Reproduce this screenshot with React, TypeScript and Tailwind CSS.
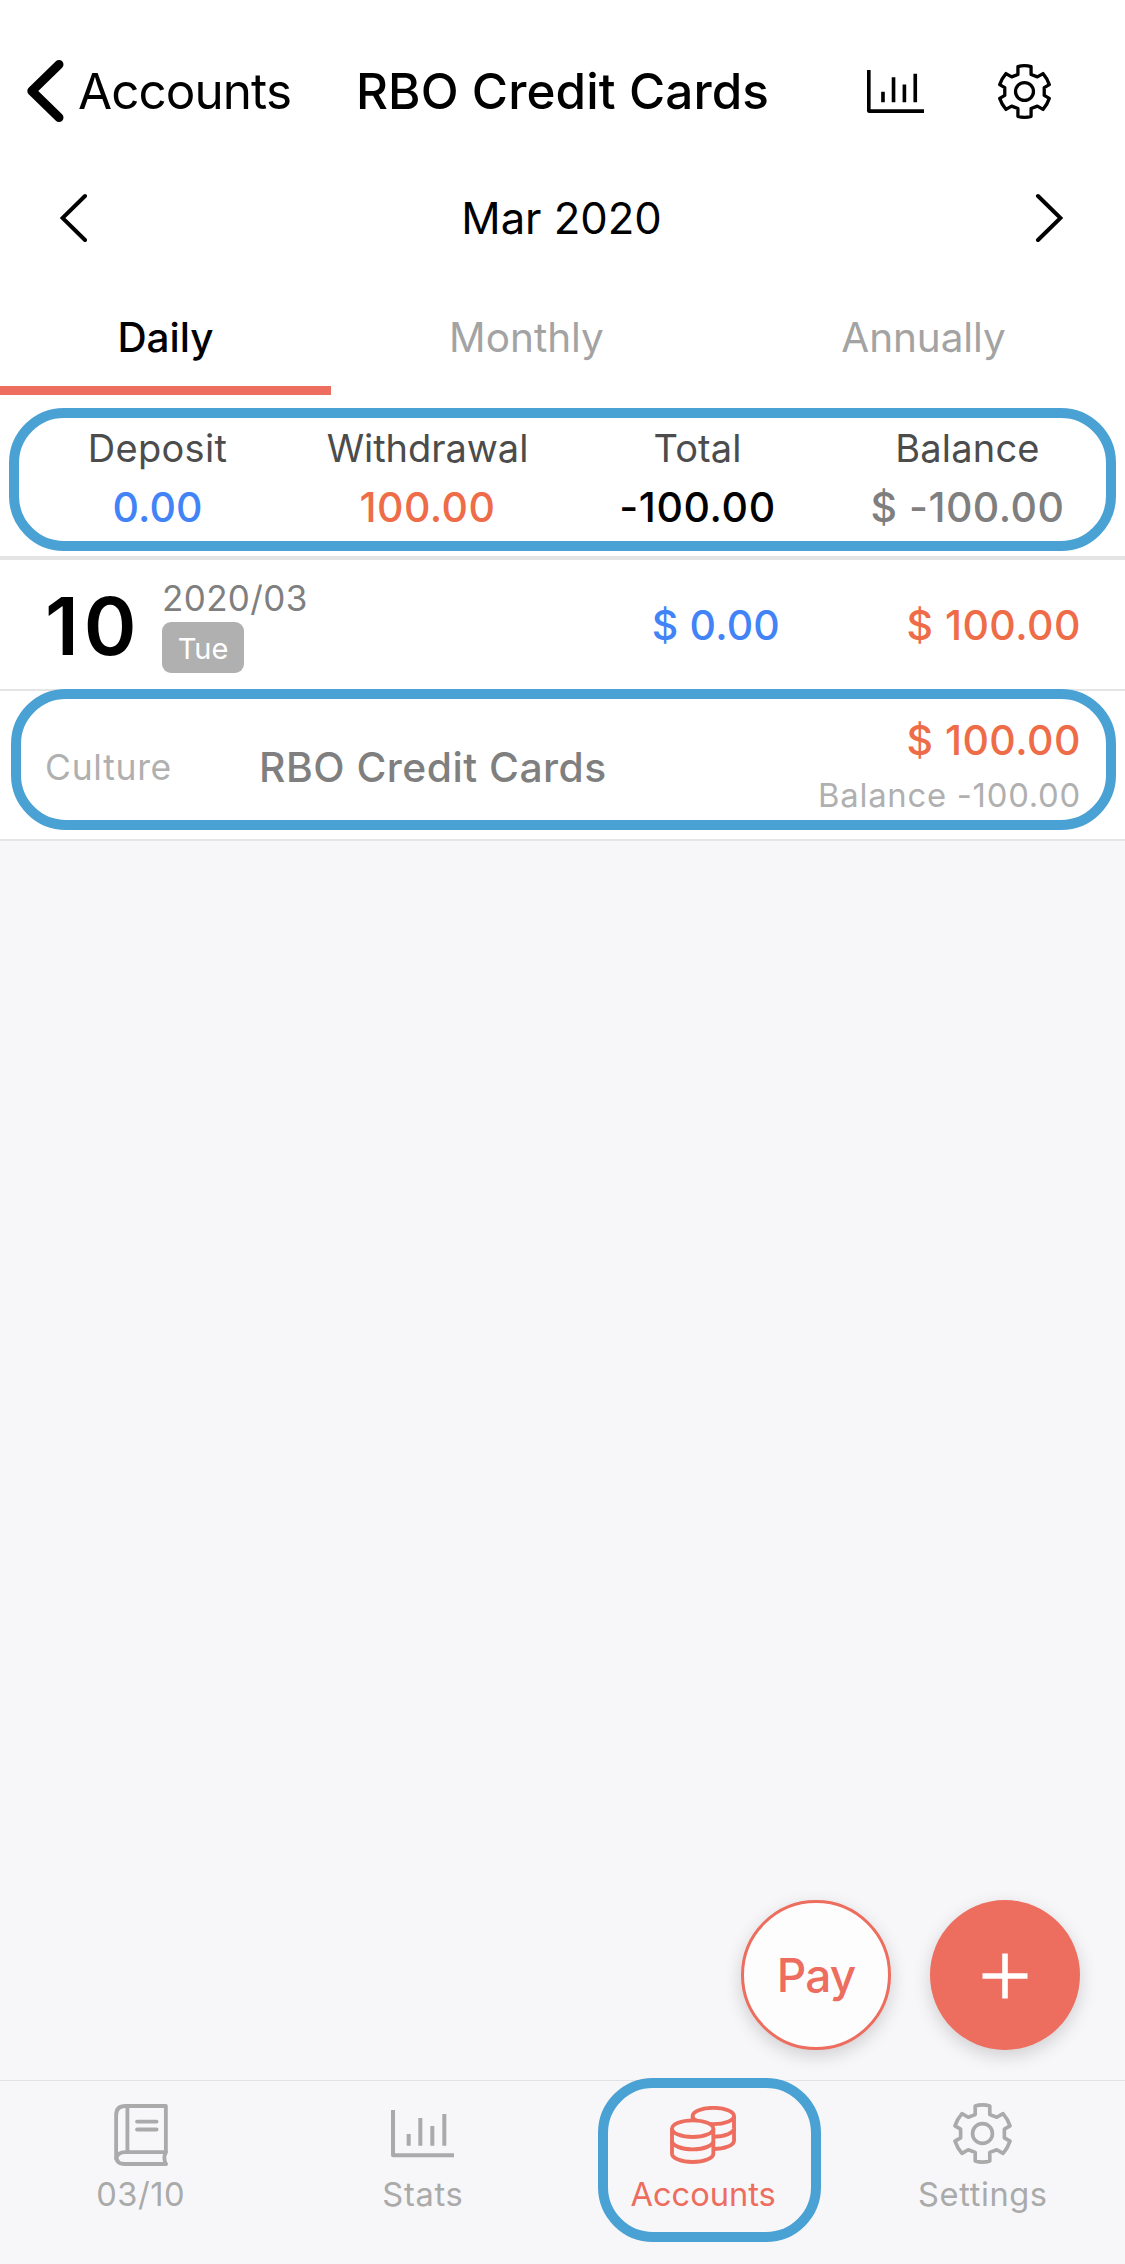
import type { ReactNode } from 'react';

function GearIcon({ className }: { className: string }) {
  return (
    <svg viewBox="-92 -92 184 184" fill="none" stroke="currentColor" strokeWidth="11" strokeLinejoin="round" className={className}>
      <path d="M-22-57V-83Q0-90 22-83V-57L43-49L62-60Q76-44 83-23L66-13V13L83 23Q76 44 62 60L43 49L22 57V83Q0 90-22 83V57L-43 49L-62 60Q-76 44-83 23L-66 13V-13L-83-23Q-76-44-62-60L-43-49Z" />
      <circle r="30" />
    </svg>
  );
}

function ChartIcon({ className }: { className: string }) {
  return (
    <svg viewBox="0 0 189 142" fill="none" stroke="currentColor" strokeWidth="12" strokeLinejoin="round" className={className}>
      <path d="M6 0V136H189M53 72V107M88 24V107M124 48V107M160 12V107" />
    </svg>
  );
}

function BookIcon() {
  return (
    <svg viewBox="0 0 162 187" fill="none" stroke="currentColor" strokeWidth="11.5" strokeLinecap="round" strokeLinejoin="round" className="mt-px h-[62px] w-[54px]">
      <path d="M156 145V6H34Q6 6 6 34V155Q6 181 32 181H156" />
      <path d="M6 165Q10 145 34 145H156M156 145Q147 163 156 181" />
      <path d="M40 8V143M69 53H128M69 77H128" />
    </svg>
  );
}

function CoinsIcon() {
  return (
    <svg viewBox="0 0 198 174" fill="#f7f7f9" stroke="currentColor" strokeWidth="11.5" className="mt-px h-[58px] w-[66px]">
      <path d="M68 30V104A62 25 0 0 0 192 104V30" />
      <path d="M68 67A62 25 0 0 0 192 67" />
      <ellipse cx="130" cy="30" rx="62" ry="24.5" />
      <path d="M6 68V143A62 25 0 0 0 130 143V68" />
      <path d="M6 105A62 25 0 0 0 130 105" />
      <ellipse cx="68" cy="68" rx="62" ry="25" />
    </svg>
  );
}

function Chevron({ right = false }: { right?: boolean }) {
  return (
    <svg viewBox="0 0 28 50" fill="none" stroke="currentColor" strokeWidth="4" strokeLinecap="round" className="h-[50px] w-[28px]">
      <path d={right ? 'M3 3L25.500 25L3 47' : 'M25 3L2.500 25L25 47'} />
    </svg>
  );
}

const summary = [
  { label: 'Deposit', value: '0.00', labelStyle: 'tracking-[0.3px]', style: 'text-[#4284f7] tracking-[0.1px]' },
  { label: 'Withdrawal', value: '100.00', labelStyle: 'tracking-[-0.05px]', style: 'text-[#ee6c48] tracking-[0.5px]' },
  { label: 'Total', value: '-100.00', labelStyle: 'tracking-[0.1px]', style: 'text-black tracking-[0.65px]' },
  { label: 'Balance', value: '$ -100.00', labelStyle: 'tracking-[0.2px]', style: 'text-[#7f7f7f] tracking-[0.5px]' },
];

function NavItem({ icon, label, className }: { icon: ReactNode; label: string; className: string }) {
  return (
    <div className={`relative flex flex-1 flex-col items-center pt-[21px] text-[32.6px] leading-[40px] ${className}`}>
      <div className="flex h-16 items-center">{icon}</div>
      <div className="mt-2">{label}</div>
    </div>
  );
}

export default function App() {
  return (
    <div className="relative flex h-[2264px] w-[1125px] flex-col overflow-hidden bg-[#f7f7f9] font-['Inter',sans-serif] whitespace-nowrap">
      <div className="bg-white text-black">
        <header className="flex h-[182px] items-center pr-[73px] pl-[26px] text-[49.4px]">
          <div className="flex w-[330px] items-center gap-[14px]">
            <svg viewBox="0 0 38 64" fill="none" stroke="currentColor" strokeWidth="9" strokeLinecap="round" strokeLinejoin="round" className="h-16 w-[38px]">
              <path d="M33 5.500L5.800 32L33 58.500" />
            </svg>
            <span className="tracking-[-0.9px]">Accounts</span>
          </div>
          <h1 className="font-medium tracking-[0.1px]">RBO Credit Cards</h1>
          <div className="ml-auto flex items-center gap-[73px]">
            <ChartIcon className="h-[43px] w-[57px]" />
            <GearIcon className="size-[55px]" />
          </div>
        </header>

        <div className="flex h-[106px] items-center justify-between pt-px pr-[62px] pb-[35px] pl-[60px] text-[43.6px]">
          <Chevron />
          <span className="pt-px tracking-[-0.05px]">Mar 2020</span>
          <Chevron right />
        </div>

        <div className="flex h-[107px] text-[40.5px] text-[#a3a3a3]">
          <div className="flex w-[331px] items-center justify-center border-b-[9px] border-[#ed6d5e] pt-[2px] font-medium text-black">Daily</div>
          <div className="flex w-[391px] items-center justify-center pt-[2px] pb-[9px]">Monthly</div>
          <div className="flex flex-1 items-center justify-center pt-[2px] pb-[9px] tracking-[-0.1px]">Annually</div>
        </div>

        <section className="relative h-[165px] border-b-4 border-[#e5e5e5] px-[22.5px] pt-7">
          <div className="grid grid-cols-4 text-center leading-[50px]">
            {summary.map((s) => (
              <div key={s.label}>
                <div className={`text-[38px] text-[#4c4c4c] ${s.labelStyle}`}>{s.label}</div>
                <div className={`mt-[9px] text-[41px] font-medium ${s.style}`}>{s.value}</div>
              </div>
            ))}
          </div>
          <div className="absolute top-[13px] left-[9px] h-[143px] w-[1107px] rounded-[55px] border-[10px] border-[#4aa1d4]" />
        </section>

        <section className="flex h-[131px] items-center border-b-2 border-[#e5e5e5] pr-[44px] pl-[45px] text-[41px] font-medium">
          <div className="mt-[3px] w-[117px] text-[80px] font-semibold tracking-[5px]">10</div>
          <div className="mt-[2px] font-normal">
            <div className="text-[35px] leading-[40px] tracking-[0.35px] text-[#7f7f7f]">2020/03</div>
            <div className="mt-1 flex h-[51px] w-[82px] items-center justify-center rounded-[9px] bg-[#b0b0b0] pt-[2px] text-[29px] text-white">Tue</div>
          </div>
          <div className="mt-[3px] ml-auto tracking-[0.2px] text-[#4284f7]">$ 0.00</div>
          <div className="mt-[3px] w-[301px] text-right tracking-[0.5px] text-[#ee6c48]">$ 100.00</div>
        </section>

        <section className="relative flex h-[150px] items-center border-b-2 border-[#e5e5e5] pt-[5px] pr-[44px] pl-[45px]">
          <div className="w-[214px] text-[35.5px] tracking-[0.7px] text-[#b0b0b0]">Culture</div>
          <div className="text-[40.8px] font-medium tracking-[0.5px] text-[#7f7f7f]">RBO Credit Cards</div>
          <div className="ml-auto text-right leading-[55px]">
            <div className="text-[41px] font-medium tracking-[0.5px] text-[#ee6c48]">$ 100.00</div>
            <div className="text-[32.8px] tracking-[0.75px] text-[#b0b0b0]">Balance -100.00</div>
          </div>
          <div className="absolute -top-[2px] left-[11px] h-[141px] w-[1105px] rounded-[55px] border-[10px] border-[#4aa1d4]" />
        </section>
      </div>

      <div className="absolute top-[1900px] right-[45px] flex gap-[39px]">
        <button className="flex size-[150px] items-center justify-center rounded-full border-[3px] border-[#ed6d5e] bg-[#fdfdfd] text-[46px] font-medium tracking-[-0.9px] text-[#ed6d5e] shadow-[0_6px_18px_rgba(0,0,0,0.16)]">
          Pay
        </button>
        <button className="flex size-[150px] items-center justify-center rounded-full bg-[#ed6d5e] pt-px text-white shadow-[0_6px_18px_rgba(0,0,0,0.16)]">
          <svg viewBox="0 0 46 46" stroke="currentColor" strokeWidth="5.600" className="size-[46px]">
            <path d="M23 .5V45.500M.5 23H45.500" />
          </svg>
        </button>
      </div>

      <nav className="mt-auto flex h-[184px] border-t border-[#e2e2e4]">
        <NavItem icon={<BookIcon />} label="03/10" className="tracking-[0.5px] text-[#aaaaaa]" />
        <NavItem icon={<ChartIcon className="h-[47.300px] w-[63px]" />} label="Stats" className="left-px tracking-[0.7px] text-[#aaaaaa]" />
        <div className="relative flex flex-1">
          <NavItem icon={<CoinsIcon />} label="Accounts" className="text-[#ed6d5e]" />
          <div className="absolute -top-[3px] left-[35.5px] h-[164px] w-[223px] rounded-[55px] border-[10px] border-[#4aa1d4]" />
        </div>
        <NavItem icon={<GearIcon className="-mt-px size-[61px]" />} label="Settings" className="right-[1.5px] tracking-[0.6px] text-[#aaaaaa]" />
      </nav>
    </div>
  );
}
